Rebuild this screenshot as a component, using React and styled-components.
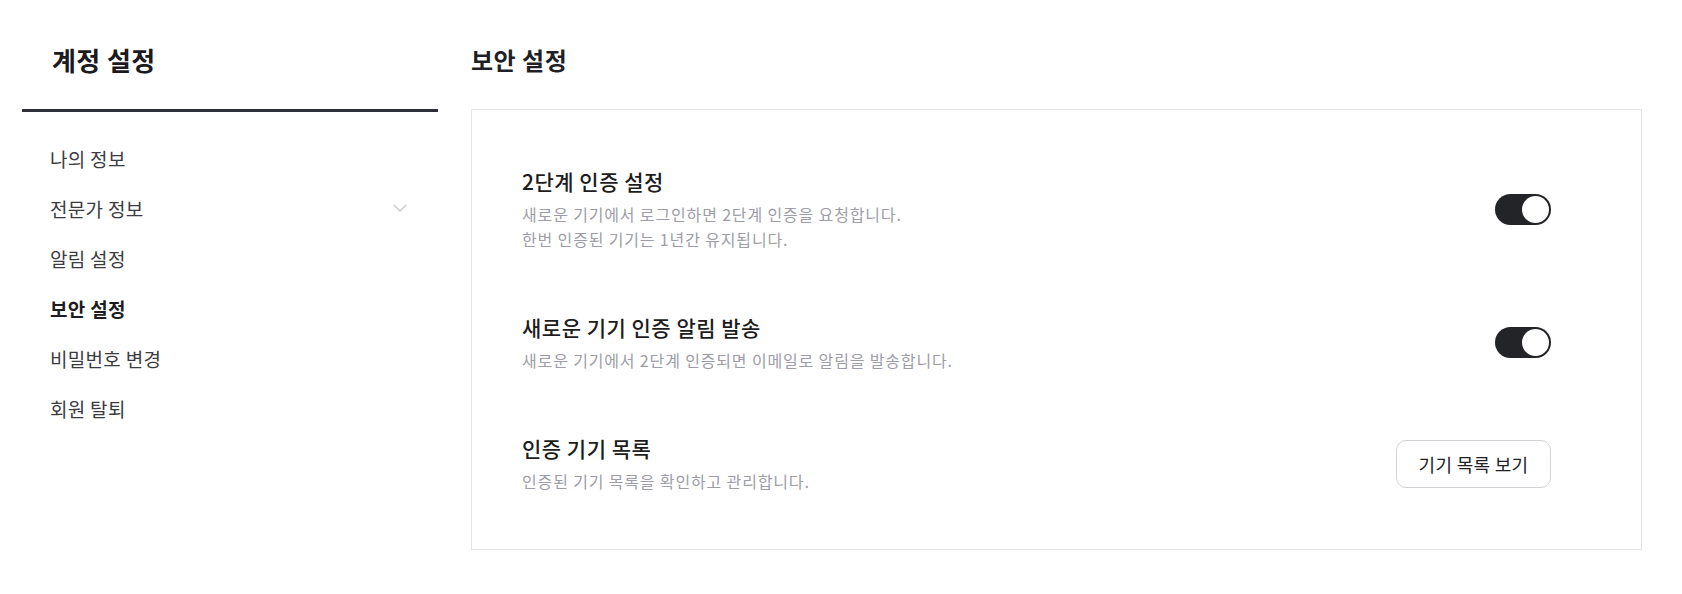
import React, { useState } from "react";
import styled, { createGlobalStyle } from "styled-components";

const GlobalStyle = createGlobalStyle`
  * {
    box-sizing: border-box;
  }

  body {
    margin: 0;
    background: #ffffff;
    font-family: "Noto Sans CJK KR", "Noto Sans", sans-serif;
    color: #1c1c21;
  }
`;

const menu = [
  { label: "나의 정보" },
  { label: "전문가 정보", expandable: true },
  { label: "알림 설정" },
  { label: "보안 설정" },
  { label: "비밀번호 변경" },
  { label: "회원 탈퇴" },
];

function Chevron() {
  return (
    <svg width="14" height="8" viewBox="0 0 14 8" fill="none">
      <polyline
        points="1,1 7,7 13,1"
        stroke="#c6c6ce"
        strokeWidth="1.2"
        strokeLinecap="round"
        strokeLinejoin="round"
      />
    </svg>
  );
}

export default function App() {
  const [active, setActive] = useState("보안 설정");
  const [twoStep, setTwoStep] = useState(true);
  const [notify, setNotify] = useState(true);

  return (
    <>
      <GlobalStyle />
      <Page>
        <Sidebar>
          <SideHeader>
            <h2>계정 설정</h2>
          </SideHeader>
          <Nav>
            {menu.map((item) => (
              <NavItem
                key={item.label}
                $active={item.label === active}
                onClick={() => setActive(item.label)}
              >
                <span>{item.label}</span>
                {item.expandable && <Chevron />}
              </NavItem>
            ))}
          </Nav>
        </Sidebar>

        <Main>
          <MainHeader>
            <h1>보안 설정</h1>
          </MainHeader>
          <Card>
            <Row>
              <Info>
                <h3>2단계 인증 설정</h3>
                <p>
                  새로운 기기에서 로그인하면 2단계 인증을 요청합니다.
                  <br />
                  한번 인증된 기기는 1년간 유지됩니다.
                </p>
              </Info>
              <Switch
                role="switch"
                aria-checked={twoStep}
                $on={twoStep}
                onClick={() => setTwoStep(!twoStep)}
              >
                <span />
              </Switch>
            </Row>

            <Row>
              <Info>
                <h3>새로운 기기 인증 알림 발송</h3>
                <p>새로운 기기에서 2단계 인증되면 이메일로 알림을 발송합니다.</p>
              </Info>
              <Switch
                role="switch"
                aria-checked={notify}
                $on={notify}
                onClick={() => setNotify(!notify)}
              >
                <span />
              </Switch>
            </Row>

            <Row>
              <Info>
                <h3>인증 기기 목록</h3>
                <p>인증된 기기 목록을 확인하고 관리합니다.</p>
              </Info>
              <OutlineButton>기기 목록 보기</OutlineButton>
            </Row>
          </Card>
        </Main>
      </Page>
    </>
  );
}

const Page = styled.div`
  display: flex;
  gap: 33px;
  padding: 0 40px 0 22px;
  width: 1682px;
  min-height: 594px;
`;

const Sidebar = styled.aside`
  width: 416px;
  flex-shrink: 0;
`;

const SideHeader = styled.div`
  height: 112px;
  padding: 42px 0 0 30px;
  border-bottom: 3px solid #2f2f38;

  h2 {
    margin: 0;
    font-size: 26px;
    line-height: 36px;
    letter-spacing: 0.4px;
    font-weight: 700;
    color: #1a1a1f;
  }
`;

const Nav = styled.nav`
  display: flex;
  flex-direction: column;
  padding-top: 21px;
`;

const NavItem = styled.div`
  display: flex;
  align-items: center;
  justify-content: space-between;
  height: 50px;
  padding: 0 31px 0 28px;
  font-size: 19px;
  letter-spacing: 0.3px;
  font-weight: ${(p) => (p.$active ? 700 : 400)};
  color: ${(p) => (p.$active ? "#1c1c22" : "#3b3b43")};
  cursor: pointer;
`;

const Main = styled.main`
  flex: 1;
  min-width: 0;
`;

const MainHeader = styled.div`
  height: 109px;
  padding-top: 43px;

  h1 {
    margin: 0;
    font-size: 24px;
    line-height: 34px;
    letter-spacing: 0.5px;
    font-weight: 700;
    color: #1f1f26;
  }
`;

const Card = styled.section`
  display: flex;
  flex-direction: column;
  gap: 60px;
  border: 1px solid #e2e2e8;
  padding: 56px 90px 55px 50px;
`;

const Row = styled.div`
  display: flex;
  align-items: center;
  justify-content: space-between;
`;

const Info = styled.div`
  h3 {
    margin: 0;
    font-size: 21px;
    line-height: 30px;
    letter-spacing: 0.5px;
    font-weight: 500;
    color: #1c1c21;
  }

  p {
    margin: 6px 0 0;
    font-size: 16px;
    line-height: 25px;
    letter-spacing: 0.85px;
    color: #9d9da7;
  }
`;

const Switch = styled.button`
  display: flex;
  align-items: center;
  justify-content: ${(p) => (p.$on ? "flex-end" : "flex-start")};
  width: 56px;
  height: 31px;
  padding: 0 2px;
  border: none;
  border-radius: 16px;
  background: ${(p) => (p.$on ? "#232427" : "#d4d4da")};
  cursor: pointer;

  span {
    width: 27px;
    height: 27px;
    border-radius: 50%;
    background: #ffffff;
  }
`;

const OutlineButton = styled.button`
  width: 155px;
  height: 48px;
  border: 1px solid #d2d2d9;
  border-radius: 10px;
  background: #ffffff;
  font-family: inherit;
  font-size: 18px;
  letter-spacing: 0.3px;
  color: #222226;
  cursor: pointer;
`;
